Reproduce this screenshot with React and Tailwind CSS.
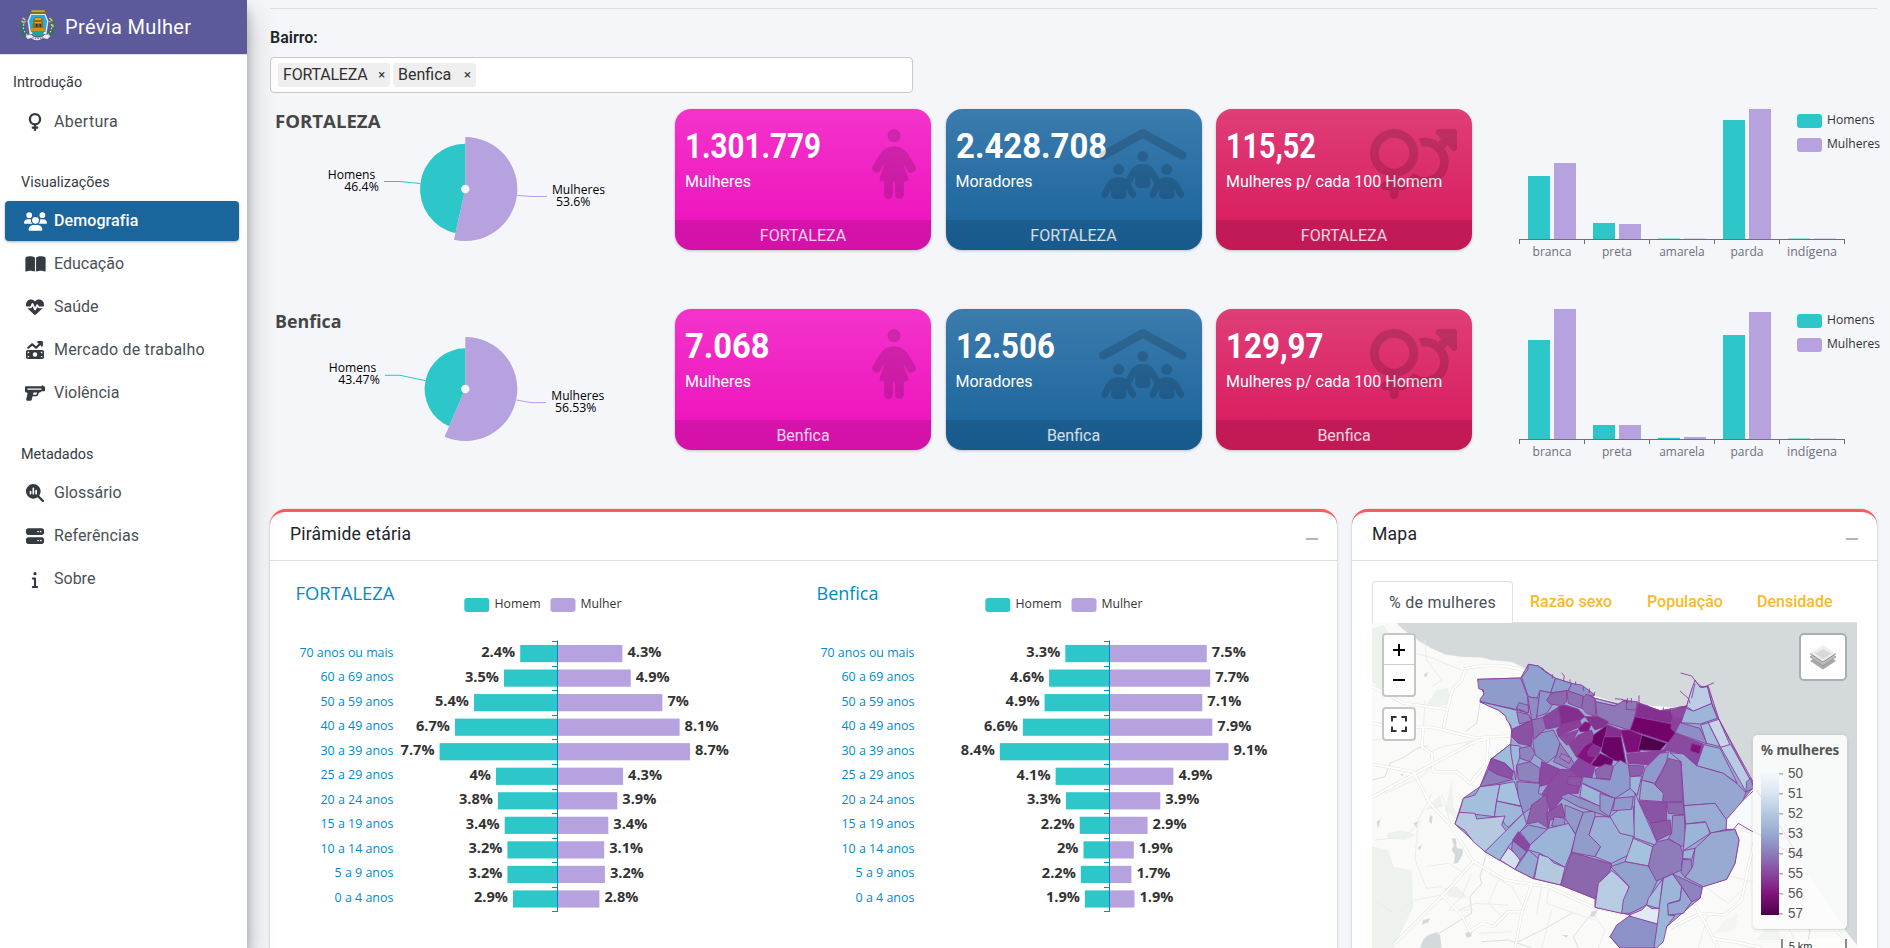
import React from 'react';
import {
  FaVenus, FaUsers, FaBookOpen, FaHeartPulse, FaMoneyBillTrendUp, FaGun,
  FaMagnifyingGlassChart, FaServer, FaInfo, FaPersonDress, FaPeopleRoof, FaVenusMars,
} from 'react-icons/fa6';

const TEAL = '#2ec7c9';
const LILAC = '#b6a2de';

function Crest() {
  return (
    <svg viewBox="0 0 36 32" className="h-[32px] w-[37px]">
      <path d="M11 1h15v3l-1 1H12l-1-1z" fill="#8a6d1d" />
      <path d="M12 1.5h13v1.2H12z" fill="#d9c36a" />
      <path d="M11 5h15l3 7-2 13H10L8 12z" fill="#dfe9e6" />
      <path d="M12 6h13l2.500 6-1.500 11H11.500L9.500 12z" fill="#28a9e0" />
      <path d="M14 10l2-2h5l2 2 1 9H13z" fill="#8d6a13" />
      <path d="M15.500 9h6v2h-6zM15 13h7v1.200h-7z" fill="#d9a92c" />
      <path d="M16.500 15h1.500v3h-1.500zM20 15h1.500v3H20z" fill="#3b2c08" />
      <path d="M11 19h14v3H11z" fill="#c7912a" />
      <path d="M12 22h13l-2 5h-9z" fill="#18a999" />
      <path d="M5 10c-5 6-3 14 4 18M31 10c5 6 3 14-4 18" fill="none" stroke="#2c7a4c" strokeWidth="4" strokeDasharray="3 1" />
      <path d="M6 12c-4 5-2 11 2 14M30 12c4 5 2 11-2 14" fill="none" stroke="#cfe3c5" strokeWidth="1.200" strokeDasharray="1.500 2" />
      <path d="M3 9l3 2M2 12l3 2" stroke="#e8a5b5" strokeWidth="1.600" />
      <path d="M30 9l3 3M32 15l2 3" stroke="#ecc53b" strokeWidth="1.600" />
      <path d="M6 27c4-2 6-2 7 0 3 2 8 2 11 0 1-2 3-2 7 0l-3 3-5-1c-3 3-8 3-11 0l-4 1z" fill="#e9ecec" />
      <path d="M13 28.500c3 1.500 8 1.500 11 0" fill="none" stroke="#6d7d7a" strokeWidth="1" strokeDasharray="1.500 1" />
    </svg>
  );
}

function NavItem({ icon: Icon, label, active, wide, track }) {
  return (
    <a className={`mx-[5px] flex h-10 w-[234px] items-center rounded-[4px] ${active ? 'bg-[#1b659d] text-white shadow-[0_1px_3px_rgba(0,0,0,0.3)]' : 'text-[#343a40]'}`}>
      <span className="ml-[16px] flex w-[28px] justify-center">
        <Icon className={wide || 'h-[18px] w-[18px]'} preserveAspectRatio="xMidYMid meet" />
      </span>
      <span className={`ml-[5px] whitespace-nowrap text-[16px] ${track || ''} ${active ? 'font-medium' : 'text-[#495057]'}`}>{label}</span>
    </a>
  );
}

function Sidebar() {
  return (
    <aside className="relative z-10 flex h-[948px] w-[247px] shrink-0 flex-col bg-white shadow-[0_14px_28px_rgba(0,0,0,0.25),0_10px_10px_rgba(0,0,0,0.22)]">
      <div className="flex h-[54px] items-center bg-[#5c5a9b] pl-[19px] shadow-[0_1px_0_#dee2e6]">
        <span className="mt-[-4px]"><Crest /></span>
        <span className="ml-[9px] text-[20px] tracking-[0.35px] text-white">Prévia Mulher</span>
      </div>
      <div className="mt-[18px] pl-[13px] text-[14.4px] leading-[22px] text-[#343a40]">Introdução</div>
      <nav className="mt-[8px]"><NavItem icon={FaVenus} label="Abertura" track="tracking-[0.3px]" /></nav>
      <div className="mt-[30px] pl-[21px] text-[14.4px] leading-[22px] text-[#343a40]">Visualizações</div>
      <nav className="mt-[7px] flex flex-col gap-[3px]">
        <NavItem icon={FaUsers} label="Demografia" active wide="h-[19px] w-[23px]" track="tracking-[0.1px]" />
        <NavItem icon={FaBookOpen} label="Educação" wide="h-[18px] w-[21px]" />
        <NavItem icon={FaHeartPulse} label="Saúde" />
        <NavItem icon={FaMoneyBillTrendUp} label="Mercado de trabalho" track="tracking-[0.2px]" />
        <NavItem icon={FaGun} label="Violência" wide="h-[18px] w-[20px]" />
      </nav>
      <div className="mt-[31px] pl-[21px] text-[14.4px] leading-[22px] text-[#343a40]">Metadados</div>
      <nav className="mt-[7px] flex flex-col gap-[3.2px]">
        <NavItem icon={FaMagnifyingGlassChart} label="Glossário" />
        <NavItem icon={FaServer} label="Referências" track="tracking-[0.1px]" />
        <NavItem icon={FaInfo} label="Sobre" wide="h-[17px] w-[8px]" />
      </nav>
    </aside>
  );
}

function T({ x, y, w, end, children, size = 12, fill = '#000', bold }) {
  return (
    <text x={x} y={y} textLength={w} lengthAdjust="spacingAndGlyphs" textAnchor={end ? 'end' : 'start'}
      fontSize={size} fill={fill} fontWeight={bold ? 700 : 400}>{children}</text>
  );
}

function Pie({ title, titleW, rMan, pct, homens, mulheres }) {
  const a = (pct / 100) * 2 * Math.PI;
  const cx = 465.3, cy = 189, R = 52;
  const px = (r) => cx + r * Math.sin(a);
  const py = (r) => cy - r * Math.cos(a);
  return (
    <svg viewBox="270 109 405 200" className="h-[200px] w-[405px] shrink-0 font-['Open_Sans',sans-serif]">
      <T x={275} y={127.500} w={titleW} size={18} bold fill="#464646">{title}</T>
      <path d={`M${cx} ${cy}V${cy - R}A${R} ${R} 0 1 1 ${px(R)} ${py(R)}Z`} fill={LILAC} />
      <path d={`M${cx} ${cy}L${px(rMan)} ${py(rMan)}A${rMan} ${rMan} 0 0 1 ${cx} ${cy - rMan}Z`} fill={TEAL} />
      <circle cx={cx} cy={cy} r="4.200" fill="#f4f6fa" />
      <polyline points={homens.line} fill="none" stroke={TEAL} />
      <polyline points={mulheres.line} fill="none" stroke={LILAC} />
      <T x={homens.x} y={homens.y} w={47.500}>Homens</T>
      <T x={homens.px} y={homens.y + 11.700} w={homens.pw}>{homens.pct}</T>
      <T x={mulheres.x} y={mulheres.y} w={53}>Mulheres</T>
      <T x={mulheres.px} y={mulheres.y + 12} w={mulheres.pw}>{mulheres.pct}</T>
    </svg>
  );
}

function ValueCard({ value, scale, label, place, icon: Icon, iconClass, tone }) {
  return (
    <div className={`relative flex h-[141px] flex-col overflow-hidden rounded-[16px] shadow-[0_0_1px_rgba(0,0,0,0.13),0_1px_3px_rgba(0,0,0,0.2)] ${tone}`}>
      <div className="flex-1 pl-[10px] pt-[16px] text-white">
        <div className={`w-max origin-left whitespace-nowrap text-[35.2px] font-bold leading-[42px] ${scale}`}>{value}</div>
        <div className="mt-[3px] whitespace-nowrap text-[16px] leading-6">{label}</div>
      </div>
      <Icon className={`absolute right-[15px] top-[20px] h-[70px] text-black/15 ${iconClass}`} />
      <div className="h-[30px] bg-black/10 text-center text-[16px] leading-[31px] text-white/80">{place}</div>
    </div>
  );
}

function RaceBars({ bars }) {
  const names = [['branca', 39], ['preta', 30], ['amarela', 45.500], ['parda', 33], ['indígena', 50]];
  return (
    <svg viewBox="1472 109 418 200" className="h-[200px] w-[418px] shrink-0 font-['Open_Sans',sans-serif]">
      {bars.map(([h, m], i) => (
        <g key={i}>
          <rect x={1528 + i * 65} y={239 - h} width="22" height={h} fill={TEAL} />
          <rect x={1554 + i * 65} y={239 - m} width="22" height={m} fill={LILAC} />
          <T x={1552 + i * 65 - names[i][1] / 2} y={256.300} w={names[i][1]} fill="#6e7079">{names[i][0]}</T>
        </g>
      ))}
      <path d="M1519 239.500H1845M1519.500 239v5M1584.500 239v5M1649.500 239v5M1714.500 239v5M1779.500 239v5M1844.500 239v5" stroke="#6e7079" fill="none" />
      <rect x="1797" y="114" width="25" height="14" rx="3" fill={TEAL} />
      <rect x="1797" y="138" width="25" height="14" rx="3" fill={LILAC} />
      <T x={1827} y={124.300} w={47.500} fill="#333">Homens</T>
      <T x={1827} y={148.300} w={53} fill="#333">Mulheres</T>
    </svg>
  );
}

const AGES = [
  ['70 anos ou mais', 94], ['60 a 69 anos', 73], ['50 a 59 anos', 73], ['40 a 49 anos', 73], ['30 a 39 anos', 73],
  ['25 a 29 anos', 73], ['20 a 24 anos', 73], ['15 a 19 anos', 73], ['10 a 14 anos', 73], ['5 a 9 anos', 59], ['0 a 4 anos', 59],
];

function Pyramid({ title, titleW, axis, men, women }) {
  const top = 641.300, step = 24.540;
  return (
    <svg viewBox="286 561 521 387" className="h-[387px] w-[521px] shrink-0 overflow-visible font-['Open_Sans',sans-serif]">
      <T x={295.500} y={599.500} w={titleW} size={18} fill="#008acd">{title}</T>
      <rect x="464.300" y="598" width="25" height="14" rx="3" fill={TEAL} />
      <T x={494.500} y={608.300} w={46} fill="#333">Homem</T>
      <rect x="550.500" y="598" width="25" height="14" rx="3" fill={LILAC} />
      <T x={580.500} y={608.300} w={41} fill="#333">Mulher</T>
      {AGES.map(([age, w], i) => {
        const c = top + step * (i + 0.5);
        const [hv, hw] = men[i];
        const [mv, mw] = women[i];
        return (
          <g key={age}>
            <rect x={axis - hw} y={c - 8.600} width={hw} height="17.200" fill={TEAL} />
            <rect x={axis} y={c - 8.600} width={mw} height="17.200" fill={LILAC} />
            <T x={393.500} y={c + 3} w={w} end fill="#008acd">{age}</T>
            <T x={axis - hw - 5} y={c + 3.500} w={hv.length > 2 ? 34 : 21.500} end size={14} bold fill="#333">{hv}</T>
            <T x={axis + mw + 5} y={c + 3.500} w={mv.length > 2 ? 34 : 21.500} size={14} bold fill="#333">{mv}</T>
          </g>
        );
      })}
      {Array.from({ length: 12 }, (_, i) => (
        <path key={i} d={`M${axis - 5} ${Math.round(top + step * i) + 0.500}h5`} stroke="#008acd" />
      ))}
      <path d={`M${axis + 0.500} 640.500V912`} stroke="#008acd" />
    </svg>
  );
}

function Panel({ title, className, children }) {
  return (
    <section className={`flex h-[460px] shrink-0 flex-col rounded-t-[16px] border-t-[3px] border-[#ff5b5f] bg-white shadow-[0_0_1px_rgba(0,0,0,0.2),0_1px_3px_rgba(0,0,0,0.2)] ${className}`}>
      <header className="flex h-[49px] shrink-0 items-center justify-between border-b border-[#dfdfdf] pb-1 pl-5 pr-[19px]">
        <h3 className="text-[17.6px] tracking-[0.2px] text-[#212529]">{title}</h3>
        <span className="mt-[9px] h-[2px] w-[12px] bg-[#adb5bd]" />
      </header>
      {children}
    </section>
  );
}

/* Neighbourhood shapes: fill colour and outline */
const WEST = [
  ['#8f9ccb', '338,178 467,174 488,230 490,276 345,245 346,236 357,222 355,210 341,206'],
  ['#8fa2cf', '470,172 488,150 490,133 520,138 540,155 572,175 557,218 525,212 515,238 490,230'],
  ['#8a9bcd', '572,175 620,190 610,212 557,218'],
  ['#8c92c6', '620,190 650,195 690,225 655,230 610,212'],
  ['#9fbcdb', '345,245 485,278 500,300 440,330 437,315 425,300 422,288 400,270 370,258'],
  ['#8d8cc1', '454,265 462,248 490,256 490,279'],
  ['#8d82bc', '455,275 490,283 500,302 463,312'],
  ['#8f8cc3', '488,230 523,235 515,298 500,300'],
  ['#8c97c9', '525,212 557,218 550,240 565,250 545,280 515,290'],
  ['#8b6bb0', '545,240 560,220 605,212 605,245 590,257 555,252'],
  ['#8c72b3', '605,212 655,228 650,265 610,250'],
  ['#8b6cb0', '655,232 665,222 690,235 692,290 665,280 650,262'],
  ['#a6c2de', '690,235 755,252 750,258 692,245'],
  ['#8d79b6', '692,245 750,258 780,240 818,252 800,333 745,315 697,300'],
  ['#8c72b3', '500,300 535,292 543,325 505,358'],
  ['#8a52a3', '440,328 500,302 505,330 498,378 460,370 440,350'],
  ['#86499f', '535,290 580,262 588,318 545,328'],
  ['#842f90', '580,260 600,255 640,268 660,290 645,300 588,315'],
  ['#8a3f99', '575,330 588,315 645,300 650,318 580,348'],
  ['#82187f', '640,325 660,305 680,310 670,335 645,335'],
  ['#82358f', '660,290 700,290 730,305 720,320 690,330 675,310'],
  ['#8a97c9', '503,362 530,338 565,330 585,370 575,405 545,430 510,405'],
  ['#8a4a9f', '580,348 640,330 620,370 605,375'],
  ['#8a4199', '612,375 640,345 680,330 685,345 675,380 635,412'],
  ['#82127d', '635,410 660,378 710,345 700,400 675,435'],
  ['#6c0568', '685,345 728,314 720,350 710,385 680,370'],
  ['#6a0566', '718,350 768,350 783,430 745,420 708,395'],
  ['#86308f', '668,395 685,373 708,385 697,410 670,408'],
  ['#6c0568', '675,438 705,400 745,418 740,435 700,440'],
  ['#842f8f', '728,314 772,332 768,350 720,350'],
  ['#9fbcdb', '382,415 437,372 440,400 455,440 445,455 420,430'],
  ['#9cb8da', '437,375 465,378 468,400 455,440 452,480 445,440 438,400'],
  ['#8a52a4', '378,417 420,430 445,455 440,475 400,465 370,450'],
  ['#8d7fbb', '370,448 400,465 445,478 400,490 345,500'],
  ['#8d86be', '463,385 498,378 510,400 495,425 465,415'],
  ['#8e84bd', '455,435 495,425 525,445 525,490 460,480'],
  ['#9181bb', '575,405 585,370 628,430 615,448 565,425'],
  ['#9683bd', '590,400 620,415 612,430 583,412'],
  ['#8a4aa0', '530,425 585,448 560,490 520,500'],
  ['#8a4fa2', '545,500 585,448 625,450 650,470 640,520 605,520 555,580 545,530 520,540'],
  ['#8b58a5', '610,470 650,470 645,500 605,492'],
  ['#8845a0', '615,448 640,415 690,440 680,475 640,470'],
  ['#8b68ae', '690,450 720,432 745,438 735,478 695,474'],
  ['#a4bfdd', '345,500 405,493 395,543 388,590 283,577 295,535 330,525'],
  ['#a4c2de', '405,493 448,485 470,558 395,543'],
  ['#9cb7d9', '395,543 470,560 475,580 430,622 418,612 410,592 388,590'],
  ['#b5c9e1', '283,577 330,580 335,597 420,588 410,615 425,635 360,695 325,665 300,632 270,612'],
  ['#8c95c8', '455,485 525,490 520,520 545,530 475,580 460,530'],
  ['#8c62aa', '500,555 545,522 550,625 520,605 485,612'],
  ['#8a5aa6', '545,580 590,550 600,590 555,600 550,630'],
  ['#8f92c7', '568,590 600,595 598,620 560,618'],
  ['#9cb7d9', '360,695 475,580 485,612 430,680 405,722'],
  ['#864a9f', '460,635 495,675 485,695 443,660'],
  ['#d3e0ef', '405,720 430,683 468,715 450,748'],
  ['#8d8fc5', '443,662 485,695 465,720 440,688'],
  ['#96aad2', '450,748 490,690 520,715 505,776'],
  ['#8f9fcd', '465,635 490,615 550,628 495,675'],
  ['#9ab5d8', '495,675 550,625 612,610 632,645 618,697 600,742 570,725 525,700 490,690'],
  ['#b3c9e0', '508,776 522,703 550,712 565,728 600,742 587,795'],
  ['#8f99ca', '600,555 655,577 632,642 600,595'],
  ['#909cca', '655,577 690,573 690,590 672,645 707,680 690,710 620,697 632,642'],
  ['#9ab0d6', '690,590 735,590 805,652 790,705 740,730 690,710 707,680 672,645'],
  ['#8b68ae', '620,697 740,732 735,752 710,785 690,836 587,795'],
  ['#b7cce3', '690,862 700,790 740,752 760,768 792,800 770,880'],
  ['#8e9acb', '655,470 690,475 735,480 745,440 765,420 800,440 805,500 750,535 650,488'],
  ['#9cb6d8', '650,490 745,535 735,575 645,530'],
  ['#8e93c7', '585,530 610,520 735,570 733,592 670,570 640,560'],
];

const EAST = [
  ['#8c79b6', '80,242 112,245 108,270 78,268'],
  ['#833090', '115,250 180,272 212,270 218,295 212,310 105,290'],
  ['#720469', '105,290 215,312 235,330 205,368 90,330'],
  ['#7e0f78', '62,330 90,330 125,345 120,395 80,398'],
  ['#4f004b', '125,345 200,370 180,392 115,390'],
  ['#8a4ba0', '215,270 260,258 250,295 218,292'],
  ['#8a3f99', '218,295 250,295 225,338 212,325'],
  ['#8a449c', '80,402 180,392 205,385 160,435 85,430'],
  ['#884b9f', '205,368 225,340 310,372 290,437 245,400 190,390'],
  ['#80107a', '275,370 305,378 298,402 270,393'],
  ['#8d8ec5', '240,308 300,325 322,372 225,338'],
  ['#9cb5d8', '258,265 280,273 335,250 352,295 300,312 243,308'],
  ['#bccee5', '265,240 278,200 285,180 300,202 325,200 335,250 280,273 260,260'],
  ['#a3bcdb', '302,315 325,308 360,380 320,370'],
  ['#c8d6e8', '325,308 357,298 390,375 362,382'],
  ['#b7cce2', '362,382 392,373 462,500 440,518'],
  ['#98b0d6', '312,374 360,385 412,490 370,460 290,437'],
  ['#96a6d0', '210,398 250,402 290,437 370,460 412,492 438,518 425,550 378,600 345,550 252,557 243,425'],
  ['#8d99c9', '440,485 452,475 462,505 438,515'],
  ['#f5fbfd', '378,600 430,540 465,508 600,718 415,610 400,628 378,628'],
  ['#8d99ca', '135,445 180,400 205,396 200,425 165,490 125,480'],
  ['#8b66ad', '205,415 243,425 248,545 190,545 165,490 185,460'],
  ['#8b60aa', '85,435 132,438 125,465 90,470'],
  ['#9cb6d8', '90,470 125,468 112,525 90,505'],
  ['#96a9d1', '125,480 160,490 190,520 188,545 118,540'],
  ['#8a54a4', '115,543 200,548 200,600 150,610'],
  ['#8b6bb0', '200,548 250,548 253,585 205,580'],
  ['#8a5ca8', '150,610 210,600 215,640 170,662'],
  ['#8e90c5', '218,587 253,585 257,670 245,680 205,655 215,640'],
  ['#98acd3', '252,557 345,550 380,600 378,628 332,640 315,605 257,612'],
  ['#9bb5d8', '257,612 318,607 330,640 250,692'],
  ['#97aad2', '285,685 335,638 405,628 417,660 405,730 380,778 310,800 255,772 278,740'],
  ['#8e7cba', '170,665 205,658 240,675 248,700 245,750 210,765 165,785 145,735 158,680'],
  ['#9cb6d8', '105,520 170,665 165,675 100,652'],
  ['#9bb3d7', '30,590 55,570 100,560 103,650 60,640'],
  ['#8f9bcb', '0,520 45,535 28,590 0,570'],
  ['#8f9aca', '45,535 100,530 95,568 38,572'],
  ['#a5c2dc', '100,655 158,680 145,738 75,725'],
  ['#91a2ce', '32,740 75,725 145,738 170,785 140,855 90,880 65,880 70,840 88,800'],
  ['#a3bfdc', '188,777 145,835 140,855 178,866'],
  ['#9bb6d8', '190,775 218,762 245,800 240,840 205,850 205,885 225,887 200,920 190,965 170,984 160,984'],
  ['#94a8d1', '245,800 275,845 250,880 205,885 203,852 240,842'],
  ['#8d84bf', '218,762 307,803 300,835 275,845 245,800'],
  ['#dfeaf3', '88,885 125,870 140,855 155,866 178,866 172,912 100,895'],
  ['#8c92c7', '30,950 50,915 88,888 172,912 162,984 60,984'],
  ['#9bb5d8', '250,692 285,685 275,718 248,715'],
  ['#8e8cc3', '248,718 275,720 275,745 255,772 243,758'],
];

const MAJOR = [
  'M21 200L70 225L115 250L245 268', 'M300 150L290 180L262 208L248 262L235 325', 'M295 147C370 130 420 135 480 152',
  'M21 310L65 318M150 322L200 322L330 353L435 348', 'M21 532L150 460L330 365L370 355', 'M21 433L145 455L195 550L260 620L325 725L420 780L500 793L550 800L680 860L790 884',
  'M175 322L170 380L200 400L205 455L275 455L315 490L365 430L370 355', 'M325 725L240 820L90 970', 'M230 825L290 885L315 935L350 910L385 920L430 875L470 875', 'M500 793L470 880L450 984',
  'M985 845L1010 890L1060 984M915 925L1005 880L1080 885L1130 840L1150 740L1170 660', 'M1040 955L1130 970L1190 984', 'M1110 625L1180 640L1260 730L1350 850L1440 960',
];
const MINOR = [
  'M180 60L185 120L230 180L200 200M70 50L90 120L60 180M110 90L190 110L290 150M180 240L175 330', 'M21 360L140 345M60 520L170 470L210 430M190 400L230 380L340 360',
  'M200 520L160 600L150 720L185 805L230 800M230 520L260 620', 'M180 740L250 730L300 760M320 760L290 830L250 870L330 870', 'M370 760L440 800L480 870M400 780L370 850L410 890L440 870',
  'M530 800L515 880M340 940L440 935M550 810L545 850L600 870L690 900M560 870L530 984M690 890L720 930L700 984', 'M1020 800L1090 850L1140 800M1030 880L1000 984M1100 770L1180 790M1180 650L1170 800L1240 860L1300 984M1260 740L1210 830M1290 790L1240 860',
  'M30 660L120 650L170 600M25 840L90 880M110 870L150 840L230 825M280 870L330 850L430 855',
];

function MapView() {
  return (
    <svg viewBox="21 9 1455 975" className="block h-[325px] w-[485px]">
      <defs>
        <linearGradient id="ramp" x1="0" y1="0" x2="0" y2="1">
          <stop offset="0" stopColor="#f7fcfd" /><stop offset=".14" stopColor="#dfe9f3" /><stop offset=".28" stopColor="#b9cde3" />
          <stop offset=".43" stopColor="#98acd3" /><stop offset=".58" stopColor="#8c7bba" /><stop offset=".71" stopColor="#8849a0" />
          <stop offset=".85" stopColor="#7f157b" /><stop offset="1" stopColor="#4d004b" />
        </linearGradient>
      </defs>
      <rect x="21" y="9" width="1455" height="975" fill="#fafaf8" />
      <g fill="#edf2ec">
        <path d="M21 25L55 15L85 60L70 110L95 130L70 230L21 185ZM180 260L215 210L250 205L255 255ZM21 680L70 690L85 740L140 750L145 860L85 984L21 984ZM65 640L110 630L155 645L120 660L70 655ZM180 570L235 560L225 525ZM260 480L265 560L290 610L240 570ZM235 805L275 800L310 835L250 830Z" />
        <path d="M1050 940L1080 900L1120 880L1110 930ZM1170 960L1230 900L1250 960Z" opacity=".6" />
      </g>
      <path d="M95 9L110 25L145 50L165 65L200 85L240 103L290 110L350 112L380 120L440 125L490 150L600 200L760 250L960 265L978 230L990 190L1010 210L1030 200L1062 298L1110 390L1172 505L1300 720L1385 860L1476 975V9Z" fill="#d4dadc" />
      <path d="M95 9L145 50L200 85L240 103L290 110L350 112L380 120L440 125L485 148M1385 860L1476 975" fill="none" stroke="#ecc9cc" strokeWidth="2" strokeDasharray="3 5" />
      <g fill="#d4dadc">
        <path d="M260 655l12 0 4 30 18 2-2 20-14 22-12 2 4-26-10-16 6-12zM190 945l25-8 10 8 5 39h-65l10-26zM35 605l12-8-8 30zM145 610l14-6-4 20zM195 585l8 5-3 22-8-8zM175 900l20-5-5 12-20 8zM180 160l10-3-6 14-8-2zM680 875l18-4-8 18-14 2zM590 945l20 0-5 8zM300 940l18-6 2 15-14 4zM160 680l10-5-3 12-7 2zM105 463l10-2-2 8z" />
      </g>
      <g fill="none" stroke="#d1dadd" strokeWidth="2.500">
        <path d="M21 480L60 470L75 430L120 410L155 385L190 378M300 335L335 310L345 250M365 700L345 770L350 790L315 830L320 880L270 910L215 945M500 984L430 960L350 965M460 965L550 920L620 880M640 984L625 950L680 880" />
        <path d="M1300 984L1330 960L1335 930L1290 900" />
      </g>
      <g fill="none" stroke="#ececea" strokeWidth="3">{MINOR.map((d) => <path key={d} d={d} />)}</g>
      <g fill="none" stroke="#e3e3e1" strokeWidth="9" strokeLinejoin="round">{MAJOR.map((d) => <path key={d} d={d} />)}</g>
      <g fill="none" stroke="#fff" strokeWidth="6" strokeLinejoin="round">{MAJOR.map((d) => <path key={d} d={d} />)}</g>

      <g stroke="#8d3a9c" strokeWidth="2.600" strokeLinejoin="round">
        <polygon fill="#96a9d1" points="338,178 467,174 490,133 520,138 572,175 620,190 690,235 760,252 820,248 885,272 965,258 983,200 1030,200 1062,298 1167,500 1083,600 1085,628 1110,628 1122,660 1110,730 1085,778 1012,800 1005,835 980,855 905,920 890,965 870,984 765,984 735,950 795,885 690,862 690,836 587,795 505,776 450,748 360,695 270,612 295,535 345,500 378,417 437,372 440,330 425,290 400,270 345,245 357,222" />
        {WEST.map(([fill, pts], i) => <polygon key={i} fill={fill} points={pts} />)}
        <g transform="translate(705 0)">
          {EAST.map(([fill, pts], i) => <polygon key={i} fill={fill} points={pts} />)}
          <path fill="none" d="M242 159L275 168L290 188L308 203L342 188M240 213L265 235L270 250M285 190L275 235M322 200L335 250L352 290L470 505M45 236L65 238L75 246M82 234V250M94 234V248M117 226V250M130 255L145 258M190 262V273M212 264V272M235 262L262 258" />
        </g>
        <path fill="none" d="M530 142L537 150M562 163V175M590 158L598 168L595 185M615 178V190M632 184V195M655 200V212M673 205V220M690 215L682 235M770 238L790 245" />
      </g>

      <g transform="translate(705 0)">
        <rect x="459" y="347" width="282" height="582" rx="14" fill="#000" opacity=".13" stroke="#000" strokeWidth="14" strokeOpacity=".25" />
        <rect x="459" y="345" width="282" height="582" rx="14" fill="#d9dedf" />
        <path d="M459 345H741V910L590 700L465 505L459 500Z" fill="#d4dadc" opacity=".4" />
        <rect x="459" y="345" width="282" height="582" rx="14" fill="#fff" opacity=".82" />
        <path d="M459 620L595 700L620 750L730 925H473Q459 925 459 912Z" fill="#fff" opacity=".55" />
        <path d="M470 508L484 533M460 633L600 718L538 615" fill="none" stroke="#f0d6f0" strokeWidth="3" />
        <rect x="483" y="450" width="54" height="435" fill="url(#ramp)" />
        <g fontFamily="Liberation Sans, sans-serif" fill="#555">
          <text x="483" y="405" fontSize="42" fontWeight="700" textLength="235" lengthAdjust="spacingAndGlyphs" fontFamily="Noto Sans, sans-serif">% mulheres</text>
          {[50, 51, 52, 53, 54, 55, 56, 57].map((n, i) => (
            <g key={n}>
              <rect x="537" y={460 + i * 60} width="12" height="3" fill="#888" />
              <text x="564" y={475 + i * 60} fontSize="42" textLength="45" lengthAdjust="spacingAndGlyphs">{n}</text>
            </g>
          ))}
        </g>
        <path d="M543 957H741V984H543Z" fill="#fff" opacity=".5" />
        <path d="M546 957V984M738 957V984" stroke="#777" strokeWidth="5" />
        <text x="566" y="990" fontSize="33" fill="#333" fontFamily="Liberation Sans, sans-serif">5 km</text>
      </g>
    </svg>
  );
}

function MapControls() {
  return (
    <>
      <div className="absolute left-[10px] top-[10px] flex w-[34px] flex-col rounded-[4px] border-2 border-[#c5c6c5] bg-white">
        <span className="flex h-[30px] items-center justify-center border-b border-[#ccc]">
          <svg viewBox="0 0 12 12" className="h-3 w-3"><path d="M0 6H12M6 0V12" stroke="#000" strokeWidth="2" /></svg>
        </span>
        <span className="flex h-[30px] items-center justify-center">
          <svg viewBox="0 0 12 12" className="h-3 w-3"><path d="M0 6H12" stroke="#000" strokeWidth="2" /></svg>
        </span>
      </div>
      <div className="absolute left-[10px] top-[84px] flex h-[34px] w-[34px] items-center justify-center rounded-[4px] border-2 border-[#c5c6c5] bg-white">
        <svg viewBox="0 0 16 16" className="h-4 w-4"><path d="M1 5.500V1H5.500M10.500 1H15V5.500M15 10.500V15H10.500M5.500 15H1V10.500" fill="none" stroke="#333" strokeWidth="2" /></svg>
      </div>
      <div className="absolute right-[10px] top-[10px] flex h-[48px] w-[48px] items-center justify-center rounded-[5px] border-2 border-[#a9aeb0] bg-white">
        <svg viewBox="0 0 26 26" className="h-[26px] w-[26px]">
          <path d="M0 17l13 8.500 13-8.500-3-2-10 6-10-6z" fill="#a9a9a9" />
          <path d="M0 13l13 8.500 13-8.500-3-2-10 6-10-6z" fill="#bdbdbd" stroke="#8e8e8e" strokeWidth=".7" />
          <path d="M0 9.500L13 1l13 8.500L13 18z" fill="#eee" />
          <path d="M0 9.500l13 8.500 13-8.500" fill="none" stroke="#8f8f8f" strokeWidth="1" />
          <path d="M5 9.500L13 5l8 4.500-8 5.500z" fill="#d8d8d8" />
        </svg>
      </div>
    </>
  );
}

const PINK = 'bg-[linear-gradient(180deg,#f433cb,#ee16be_80%,#ed12bd)]';
const BLUE = 'bg-[linear-gradient(180deg,#3c7bad,#1f689f_80%,#1b659d)]';
const RED = 'bg-[linear-gradient(180deg,#df3e78,#d91f62_80%,#d81b60)]';

function Summary({ place, pie, values, bars }) {
  return (
    <div className="flex h-[200px] items-start">
      {pie}
      <div className="grid w-[797px] shrink-0 grid-cols-3 gap-x-[14.500px]">
        <ValueCard {...values[0]} label="Mulheres" place={place} icon={FaPersonDress} iconClass="w-[44px]" tone={PINK} />
        <ValueCard {...values[1]} label="Moradores" place={place} icon={FaPeopleRoof} iconClass="w-[87.500px]" tone={BLUE} />
        <ValueCard {...values[2]} label="Mulheres p/ cada 100 Homem" place={place} icon={FaVenusMars} iconClass="w-[87.500px]" tone={RED} />
      </div>
      <RaceBars bars={bars} />
    </div>
  );
}

function zip(labels, widths) {
  return labels.split(' ').map((l, i) => [l + '%', widths[i]]);
}

export default function App() {
  return (
    <div className="flex h-[948px] w-[1890px] overflow-hidden bg-[#f4f6fa] font-[Roboto,'Liberation_Sans',sans-serif]">
      <Sidebar />
      <main className="flex w-[1643px] shrink-0 flex-col pl-[23px] pt-[8px]">
        <hr className="w-[1607px] shrink-0 border-[#dcdee2]" />
        <label className="mt-[18px] shrink-0 text-[16px] font-semibold leading-[22px] text-[#212529]">Bairro:</label>
        <div className="mt-[8px] flex h-[36px] w-[643px] shrink-0 items-center gap-[3px] rounded-[4px] border border-[#c9cacc] bg-white px-[7px] text-[16px] text-[#303030]">
          <span className="flex h-6 w-[112px] items-center justify-between rounded-[3px] bg-[#efefef] px-[5px] tracking-[-0.2px]">FORTALEZA <i className="text-[13px] not-italic">×</i></span>
          <span className="flex h-6 w-[83px] items-center justify-between rounded-[3px] bg-[#efefef] px-[5px]">Benfica <i className="text-[13px] not-italic">×</i></span>
        </div>
        <div className="mt-[16px] shrink-0">
          <Summary
            place="FORTALEZA"
            pie={<Pie title="FORTALEZA" titleW={105.500} rMan={45.300} pct={53.500}
              homens={{ x: 327.700, y: 179, px: 344.300, pw: 34.500, pct: '46.4%', line: '384,181.500 400,181.500 420,183.500' }}
              mulheres={{ x: 552, y: 193.500, px: 556, pw: 34.500, pct: '53.6%', line: '517,195.300 531,196.500 547,196.500' }} />}
            values={[{ value: '1.301.779', scale: 'scale-x-[0.840]' }, { value: '2.428.708', scale: 'scale-x-[0.935]' }, { value: '115,52', scale: 'scale-x-[0.820]' }]}
            bars={[[63, 76], [16, 15], [0.400, 0.400], [119, 130], [0.400, 0.400]]}
          />
          <Summary
            place="Benfica"
            pie={<Pie title="Benfica" titleW={66.500} rMan={40.700} pct={56.530}
              homens={{ x: 328.700, y: 172, px: 338.300, pw: 41.500, pct: '43.47%', line: '385,175.300 400,175.300 425.500,180.700' }}
              mulheres={{ x: 551.300, y: 200, px: 555, pw: 41.500, pct: '56.53%', line: '516.500,200 531,202.600 546,202.600' }} />}
            values={[{ value: '7.068', scale: 'scale-x-[0.930]' }, { value: '12.506', scale: 'scale-x-[0.890]' }, { value: '129,97', scale: 'scale-x-[0.890]' }]}
            bars={[[99, 130], [14, 14], [1.200, 2], [104, 127], [0.500, 0.400]]}
          />
        </div>
        <div className="flex shrink-0 gap-[15px]">
          <Panel title="Pirâmide etária" className="w-[1067px]">
            <div className="flex pl-[16px]">
              <Pyramid title="FORTALEZA" titleW={99} axis={557}
                men={zip('2.4 3.5 5.4 6.7 7.7 4 3.8 3.4 3.2 3.2 2.9', [36.800, 53, 83, 102, 117.400, 61, 59, 52.300, 49.600, 49.600, 44])}
                women={zip('4.3 4.9 7 8.1 8.7 4.3 3.9 3.4 3.1 3.2 2.8', [65.400, 73.700, 105.400, 122.600, 133, 66.100, 60.300, 51.300, 47.200, 47.900, 42.400])} />
              <Pyramid title="Benfica" titleW={62} axis={588}
                men={zip('3.3 4.6 4.9 6.6 8.4 4.1 3.3 2.2 2 2.2 1.9', [43.700, 59.900, 64.400, 86.100, 109.200, 53.400, 43, 29.300, 25.500, 28.200, 24.100])}
                women={zip('7.5 7.7 7.1 7.9 9.1 4.9 3.9 2.9 1.9 1.7 1.9', [97.800, 101.200, 93.300, 103.300, 119.500, 64.400, 51.300, 38.600, 24.800, 22.400, 25.500])} />
            </div>
          </Panel>
          <Panel title="Mapa" className="w-[525px]">
            <div className="px-5 pt-5">
              <div className="flex h-[42px] items-center whitespace-nowrap border-b border-[#dee2e6] text-[16px] font-medium text-[#fcb827]">
                <span className="mb-[-1px] flex h-[43px] w-[141px] items-center justify-center rounded-t-[4px] border border-b-0 border-[#dee2e6] bg-white font-normal tracking-[0.3px] text-[#495057]">% de mulheres</span>
                <span className="ml-[17px] w-[117px]">Razão sexo</span>
                <span className="w-[110px]">População</span>
                <span>Densidade</span>
              </div>
              <div className="relative">
                <MapView />
                <MapControls />
              </div>
            </div>
          </Panel>
        </div>
      </main>
    </div>
  );
}
